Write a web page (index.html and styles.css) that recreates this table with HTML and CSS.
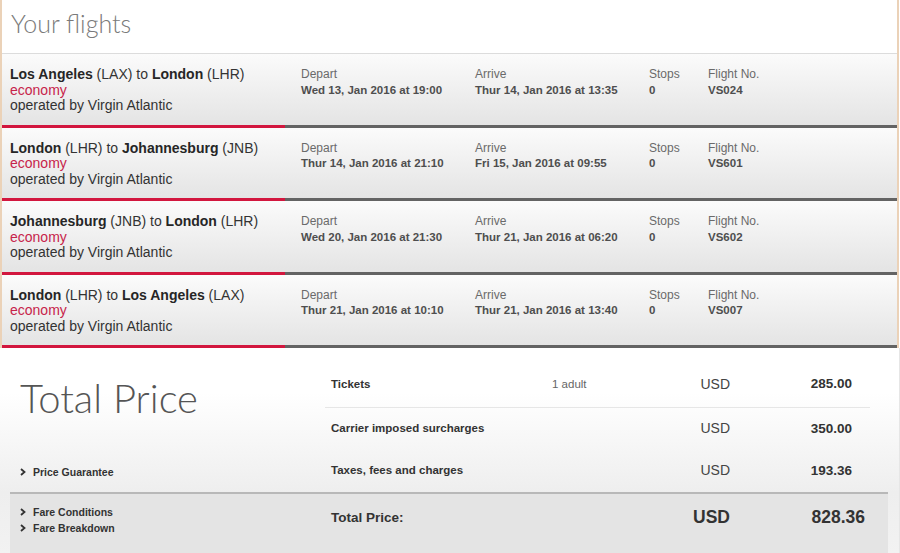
FILE: index.html
```html
<!DOCTYPE html>
<html lang="en">
<head>
<meta charset="utf-8">
<title>Your flights</title>
<link rel="stylesheet" href="styles.css">
</head>
<body>
<div class="flights">
  <div class="flights-header"><h1 class="title">Your flights</h1></div>

  <div class="flight">
    <div class="route">
      <div><b>Los Angeles</b> (LAX) to <b>London</b> (LHR)</div>
      <div class="cabin">economy</div>
      <div>operated by Virgin Atlantic</div>
    </div>
    <div class="field"><span class="label">Depart</span><span class="value">Wed 13, Jan 2016 at 19:00</span></div>
    <div class="field"><span class="label">Arrive</span><span class="value">Thur 14, Jan 2016 at 13:35</span></div>
    <div class="field"><span class="label">Stops</span><span class="value">0</span></div>
    <div class="field"><span class="label">Flight No.</span><span class="value">VS024</span></div>
  </div>

  <div class="flight">
    <div class="route">
      <div><b>London</b> (LHR) to <b>Johannesburg</b> (JNB)</div>
      <div class="cabin">economy</div>
      <div>operated by Virgin Atlantic</div>
    </div>
    <div class="field"><span class="label">Depart</span><span class="value">Thur 14, Jan 2016 at 21:10</span></div>
    <div class="field"><span class="label">Arrive</span><span class="value">Fri 15, Jan 2016 at 09:55</span></div>
    <div class="field"><span class="label">Stops</span><span class="value">0</span></div>
    <div class="field"><span class="label">Flight No.</span><span class="value">VS601</span></div>
  </div>

  <div class="flight">
    <div class="route">
      <div><b>Johannesburg</b> (JNB) to <b>London</b> (LHR)</div>
      <div class="cabin">economy</div>
      <div>operated by Virgin Atlantic</div>
    </div>
    <div class="field"><span class="label">Depart</span><span class="value">Wed 20, Jan 2016 at 21:30</span></div>
    <div class="field"><span class="label">Arrive</span><span class="value">Thur 21, Jan 2016 at 06:20</span></div>
    <div class="field"><span class="label">Stops</span><span class="value">0</span></div>
    <div class="field"><span class="label">Flight No.</span><span class="value">VS602</span></div>
  </div>

  <div class="flight">
    <div class="route">
      <div><b>London</b> (LHR) to <b>Los Angeles</b> (LAX)</div>
      <div class="cabin">economy</div>
      <div>operated by Virgin Atlantic</div>
    </div>
    <div class="field"><span class="label">Depart</span><span class="value">Thur 21, Jan 2016 at 10:10</span></div>
    <div class="field"><span class="label">Arrive</span><span class="value">Thur 21, Jan 2016 at 13:40</span></div>
    <div class="field"><span class="label">Stops</span><span class="value">0</span></div>
    <div class="field"><span class="label">Flight No.</span><span class="value">VS007</span></div>
  </div>
</div>

<div class="summary">
  <div class="summary-top">
    <div class="summary-left">
      <h2 class="total-title">Total Price</h2>
      <div class="links">
        <a class="link"><svg class="chev" width="6" height="8" viewBox="0 0 6 8"><path d="M1 1 L4.5 4 L1 7" fill="none" stroke="#333" stroke-width="1.8"/></svg>Price Guarantee</a>
      </div>
    </div>
    <div class="price-table">
      <div class="price-row first">
        <span class="p-label">Tickets</span>
        <span class="p-qty">1 adult</span>
        <span class="p-cur">USD</span>
        <span class="p-amt">285.00</span>
      </div>
      <div class="price-row second">
        <span class="p-label">Carrier imposed surcharges</span>
        <span class="p-qty"></span>
        <span class="p-cur">USD</span>
        <span class="p-amt">350.00</span>
      </div>
      <div class="price-row third">
        <span class="p-label">Taxes, fees and charges</span>
        <span class="p-qty"></span>
        <span class="p-cur">USD</span>
        <span class="p-amt">193.36</span>
      </div>
    </div>
  </div>
  <div class="summary-total">
    <div class="links bottom-links">
      <a class="link"><svg class="chev" width="6" height="8" viewBox="0 0 6 8"><path d="M1 1 L4.5 4 L1 7" fill="none" stroke="#333" stroke-width="1.8"/></svg>Fare Conditions</a>
      <a class="link"><svg class="chev" width="6" height="8" viewBox="0 0 6 8"><path d="M1 1 L4.5 4 L1 7" fill="none" stroke="#333" stroke-width="1.8"/></svg>Fare Breakdown</a>
    </div>
    <div class="total-row">
      <span class="t-label">Total Price:</span>
      <span class="t-cur">USD</span>
      <span class="t-amt">828.36</span>
    </div>
  </div>
</div>
</body>
</html>
```

FILE: styles.css
```css
html, body {
  margin: 0;
  padding: 0;
  background: #fff;
}
body {
  width: 900px;
  height: 553px;
  overflow: hidden;
  font-family: "Liberation Sans", Arial, Helvetica, sans-serif;
  color: #333;
}

/* ---------- flights ---------- */
.flights {
  border-left: 2px solid #ebd2b8;
  border-right: 2px solid #ebd2b8;
  margin-right: 1px;
}
.flights-header {
  height: 53px;
  border-bottom: 1px solid #dcdcdc;
  box-sizing: content-box;
  padding: 0 0 0 9px;
}
.title {
  margin: 0;
  padding-top: 8px;
  font-family: "Lato", "Open Sans", sans-serif;
  font-weight: 300;
  font-size: 25px;
  line-height: 30px;
  color: #7a7a7a;
}

.flight {
  height: 73.5px;
  box-sizing: border-box;
  padding: 13px 0 0 8px;
  display: grid;
  grid-template-columns: 291px 174px 174px 59px 1fr;
  background:
    linear-gradient(to right, #d2163e 283px, #636363 283px) left bottom / 100% 3px no-repeat,
    linear-gradient(to bottom, #fbfbfb, #e3e3e3);
}
.route {
  font-size: 14px;
  line-height: 15.5px;
  color: #333;
}
.route b {
  color: #262626;
}
.cabin {
  color: #c7244b;
}
.field {
  display: flex;
  flex-direction: column;
  line-height: 15.5px;
}
.label {
  font-size: 12px;
  color: #6a6a6a;
}
.value {
  font-size: 11.5px;
  font-weight: bold;
  color: #4e4e4e;
}

/* ---------- summary ---------- */
.summary {
  padding: 0 11px 0 10px;
  height: 205px;
  box-sizing: border-box;
  border-right: 1px solid #e6e6e6;
  background: linear-gradient(to bottom, #ffffff 0, #ffffff 45px, #eeeeee 145px, #f2f2f2 100%);
}
.summary-top {
  display: grid;
  grid-template-columns: 315px 545px;
  height: 144px;
}
.summary-left {
  display: flex;
  flex-direction: column;
  justify-content: space-between;
  padding: 28px 0 12px 10px;
}
.total-title {
  margin: 0;
  font-family: "Lato", "Open Sans", sans-serif;
  font-weight: 300;
  font-size: 40px;
  line-height: 44px;
  color: #555;
}
.links {
  display: flex;
  flex-direction: column;
}
.link {
  display: flex;
  align-items: center;
  gap: 7px;
  font-size: 10.5px;
  font-weight: bold;
  line-height: 16px;
  color: #333;
}
.chev {
  display: block;
}

.price-table {
  padding-top: 12px;
}
.price-row {
  display: grid;
  grid-template-columns: 225px 150px 30px 122px;
  align-items: center;
}
.price-row.first {
  height: 47px;
  border-bottom: 1px solid #e6e6e6;
}
.price-row.second {
  height: 40px;
}
.price-row.third {
  height: 44px;
}
.p-label {
  padding-left: 6px;
  font-size: 11.5px;
  font-weight: bold;
  color: #333;
}
.p-qty {
  padding-left: 2px;
  font-size: 11.5px;
  color: #666;
}
.p-cur {
  text-align: right;
  font-size: 14px;
  color: #444;
}
.p-amt {
  text-align: right;
  font-size: 13.5px;
  font-weight: bold;
  color: #333;
}

.summary-total {
  display: grid;
  grid-template-columns: 315px 545px;
  height: 59px;
  border-top: 2px solid #b8b8b8;
  background: #e4e4e4;
}
.bottom-links {
  padding: 10px 0 0 10px;
}
.total-row {
  display: grid;
  grid-template-columns: 225px 180px 135px;
  align-items: center;
  height: 46px;
}
.t-label {
  padding-left: 6px;
  font-size: 13.5px;
  font-weight: bold;
  color: #333;
}
.t-cur {
  text-align: right;
  font-size: 17.5px;
  font-weight: bold;
  color: #333;
}
.t-amt {
  text-align: right;
  font-size: 17.5px;
  font-weight: bold;
  color: #333;
}
```
